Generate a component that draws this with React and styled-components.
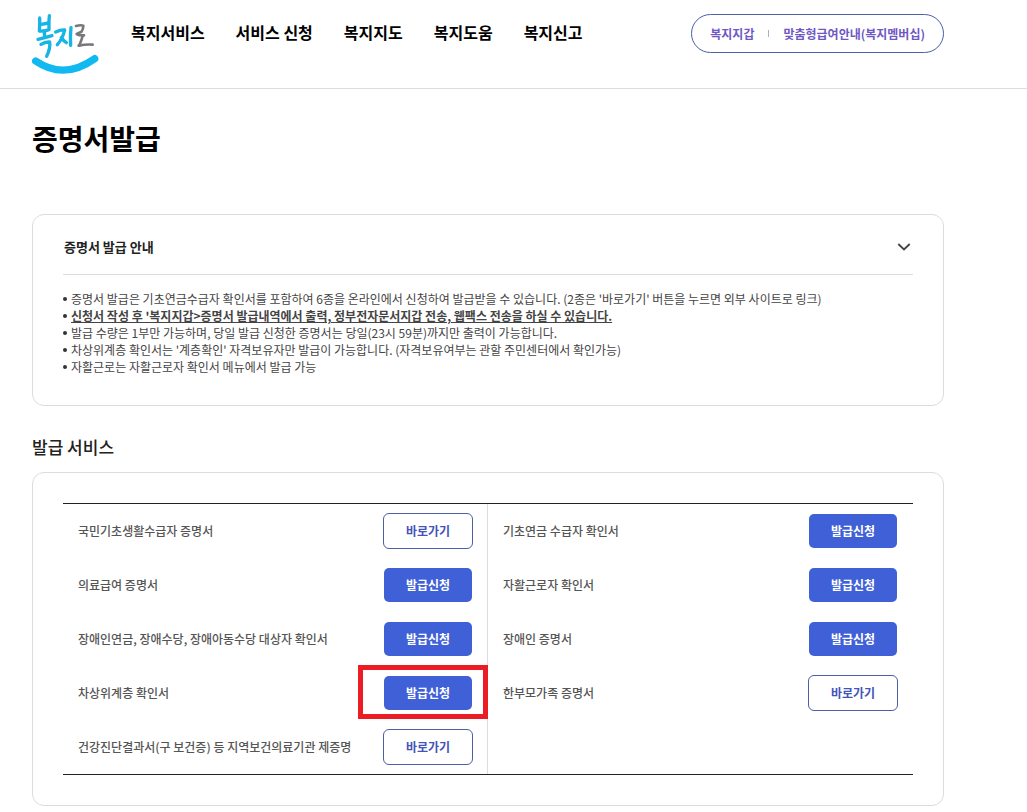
import React from "react";
import styled, { createGlobalStyle, css } from "styled-components";

const GlobalStyle = createGlobalStyle`
  *, *::before, *::after { box-sizing: border-box; }
  body {
    margin: 0;
    background: #fff;
    color: #222;
    font-family: "Noto Sans CJK KR", "Noto Sans", sans-serif;
    font-size: 12px;
  }
  h1, h2, h3, ul { margin: 0; padding: 0; }
  ul { list-style: none; }
  a { color: inherit; text-decoration: none; }
  button { font-family: inherit; cursor: pointer; }
`;

const Header = styled.header`
  display: flex;
  align-items: flex-start;
  height: 89px;
  padding: 12px 83px 0 32px;
  border-bottom: 1px solid #ddd;
`;

const LogoLink = styled.a`
  display: block;
  flex: none;
  margin-right: 32px;
  svg { display: block; }
`;

const Nav = styled.nav`
  flex: 1;
  ul { display: flex; gap: 31px; }
  a {
    display: block;
    color: #000;
    font-size: 16px;
    font-weight: 700;
    line-height: 40px;
    white-space: nowrap;
  }
`;

const QuickLinks = styled.div`
  display: flex;
  align-items: center;
  flex: none;
  height: 39px;
  margin-top: 2px;
  padding: 0 18px;
  border: 1px solid #4a5fa8;
  border-radius: 20px;
  color: #6f58c4;
  font-weight: 700;
  line-height: 20px;
  white-space: nowrap;

  a + a { display: flex; align-items: center; }
  a + a::before {
    content: "";
    width: 1px;
    height: 7px;
    margin: 0 14px;
    background: #aab0cc;
  }
`;

const Main = styled.main`
  padding: 0 83px 6px 32px;
`;

const PageTitle = styled.h1`
  padding: 27px 0 54px;
  color: #000;
  font-size: 28px;
  font-weight: 700;
  line-height: 44px;
`;

const Card = styled.section`
  padding: 0 30px 30px;
  border: 1px solid #ddd;
  border-radius: 12px;
`;

const GuideHeader = styled.div`
  display: flex;
  align-items: center;
  justify-content: space-between;
  height: 60px;
  padding: 4px 0 0 1px;
  border-bottom: 1px solid #ddd;
`;

const GuideTitle = styled.h2`
  font-size: 13px;
  font-weight: 700;
  line-height: 20px;
`;

const ToggleButton = styled.button`
  display: flex;
  padding: 0 2px;
  border: 0;
  background: none;
`;

const GuideList = styled.ul`
  padding-top: 15px;
`;

const GuideItem = styled.li`
  display: flex;
  align-items: center;
  gap: 4px;
  color: #444;
  font-size: 12px;
  line-height: 17px;

  &::before {
    content: "";
    flex: none;
    width: 4px;
    height: 4px;
    border-radius: 50%;
    background: #333;
  }

  strong { text-decoration: underline; }
`;

const SectionTitle = styled.h2`
  padding: 28px 0 12px;
  font-size: 17px;
  font-weight: 500;
  line-height: 26px;
`;

const ServiceCard = styled(Card)`
  padding: 30px;
`;

const ServiceTable = styled.table`
  width: 100%;
  border-spacing: 0;
  border-top: 1px solid #222;
  border-bottom: 1px solid #222;
  table-layout: fixed;
`;

const ServiceCell = styled.td`
  height: 54px;
  padding: 0 15px;

  &:first-child {
    padding-right: 14px;
    border-right: 1px solid #ddd;
  }
`;

const Service = styled.div`
  display: flex;
  align-items: center;
  justify-content: space-between;
  color: #555;
  font-weight: 500;
  line-height: 18px;
`;

const Action = styled.div`
  position: relative;
  flex: none;
  width: 90px;

  ${({ $highlighted }) =>
    $highlighted &&
    css`
      &::after {
        content: "";
        position: absolute;
        inset: -10px -15px -8px -25px;
        border: 5px solid #ec1c24;
        pointer-events: none;
      }
    `}
`;

const ActionButton = styled.button`
  display: block;
  width: 100%;
  height: 36px;
  padding: 0;
  border: 1px solid ${({ $filled }) => ($filled ? "transparent" : "#4a5fa8")};
  border-radius: 6px;
  background: ${({ $filled }) => ($filled ? "#3f60d6" : "#fff")};
  background-clip: padding-box;
  color: ${({ $filled }) => ($filled ? "#fff" : "#4453b8")};
  font-size: 12px;
  font-weight: 700;
  line-height: 18px;
`;

const navItems = ["복지서비스", "서비스 신청", "복지지도", "복지도움", "복지신고"];

const apply = { label: "발급신청", filled: true };
const visit = { label: "바로가기", filled: false };

const rows = [
  [
    { name: "국민기초생활수급자 증명서", action: visit },
    { name: "기초연금 수급자 확인서", action: apply },
  ],
  [
    { name: "의료급여 증명서", action: apply },
    { name: "자활근로자 확인서", action: apply },
  ],
  [
    { name: "장애인연금, 장애수당, 장애아동수당 대상자 확인서", action: apply },
    { name: "장애인 증명서", action: apply },
  ],
  [
    { name: "차상위계층 확인서", action: apply, highlighted: true },
    { name: "한부모가족 증명서", action: visit },
  ],
  [
    { name: "건강진단결과서(구 보건증) 등 지역보건의료기관 제증명", action: visit },
    null,
  ],
];

function Logo() {
  return (
    <svg width="67" height="64" viewBox="36 36 201 192" fill="none" strokeLinecap="round" strokeLinejoin="round" aria-hidden="true">
      <g stroke="#17b4e6" strokeWidth="10">
        <path d="M59 54Q60 72 58 93Q74 94 87 89Q86 66 88 47" />
        <path d="M60 74L86 69" />
        <path d="M73 94L74 112" />
        <path d="M54 118Q74 113 96 107" />
        <path d="M63 133Q76 125 89 126Q92 144 80 169" />
        <path d="M107 96Q122 89 134 90Q128 116 112 134" />
        <path d="M124 113Q130 122 139 128" />
        <path d="M153 83Q150 108 152 136" />
      </g>
      <g stroke="#77787b" strokeWidth="8">
        <path d="M168 78Q182 74 190 77Q190 87 184 96Q174 99 170 102Q178 107 192 106" />
        <path d="M188 108Q184 122 178 136" />
        <path d="M176 137Q200 132 218 134" />
      </g>
      <path d="M47 183Q132 241 224 176" stroke="#10b9f0" strokeWidth="22" />
    </svg>
  );
}

function ServiceEntry({ item }) {
  return (
    <Service>
      <span>{item.name}</span>
      <Action $highlighted={item.highlighted}>
        <ActionButton type="button" $filled={item.action.filled}>
          {item.action.label}
        </ActionButton>
      </Action>
    </Service>
  );
}

export default function App() {
  return (
    <>
      <GlobalStyle />
      <Header>
        <LogoLink href="#" aria-label="복지로">
          <Logo />
        </LogoLink>
        <Nav>
          <ul>
            {navItems.map((item) => (
              <li key={item}>
                <a href="#">{item}</a>
              </li>
            ))}
          </ul>
        </Nav>
        <QuickLinks>
          <a href="#">복지지갑</a>
          <a href="#">맞춤형급여안내(복지멤버십)</a>
        </QuickLinks>
      </Header>
      <Main>
        <PageTitle>증명서발급</PageTitle>
        <Card>
          <GuideHeader>
            <GuideTitle>증명서 발급 안내</GuideTitle>
            <ToggleButton type="button" aria-label="접기">
              <svg width="14" height="10" viewBox="0 0 14 10" fill="none" stroke="#444" strokeWidth="1.8">
                <path d="M1.3 2L7 7.5L12.7 2" />
              </svg>
            </ToggleButton>
          </GuideHeader>
          <GuideList>
            <GuideItem>
              증명서 발급은 기초연금수급자 확인서를 포함하여 6종을 온라인에서 신청하여 발급받을 수 있습니다. (2종은 '바로가기' 버튼을 누르면 외부 사이트로 링크)
            </GuideItem>
            <GuideItem>
              <strong>신청서 작성 후 '복지지갑&gt;증명서 발급내역에서 출력, 정부전자문서지갑 전송, 웹팩스 전송을 하실 수 있습니다.</strong>
            </GuideItem>
            <GuideItem>발급 수량은 1부만 가능하며, 당일 발급 신청한 증명서는 당일(23시 59분)까지만 출력이 가능합니다.</GuideItem>
            <GuideItem>차상위계층 확인서는 '계층확인' 자격보유자만 발급이 가능합니다. (자격보유여부는 관할 주민센터에서 확인가능)</GuideItem>
            <GuideItem>자활근로는 자활근로자 확인서 메뉴에서 발급 가능</GuideItem>
          </GuideList>
        </Card>
        <SectionTitle>발급 서비스</SectionTitle>
        <ServiceCard>
          <ServiceTable>
            <tbody>
              {rows.map(([left, right]) => (
                <tr key={left.name}>
                  <ServiceCell>
                    <ServiceEntry item={left} />
                  </ServiceCell>
                  <ServiceCell>{right && <ServiceEntry item={right} />}</ServiceCell>
                </tr>
              ))}
            </tbody>
          </ServiceTable>
        </ServiceCard>
      </Main>
    </>
  );
}
